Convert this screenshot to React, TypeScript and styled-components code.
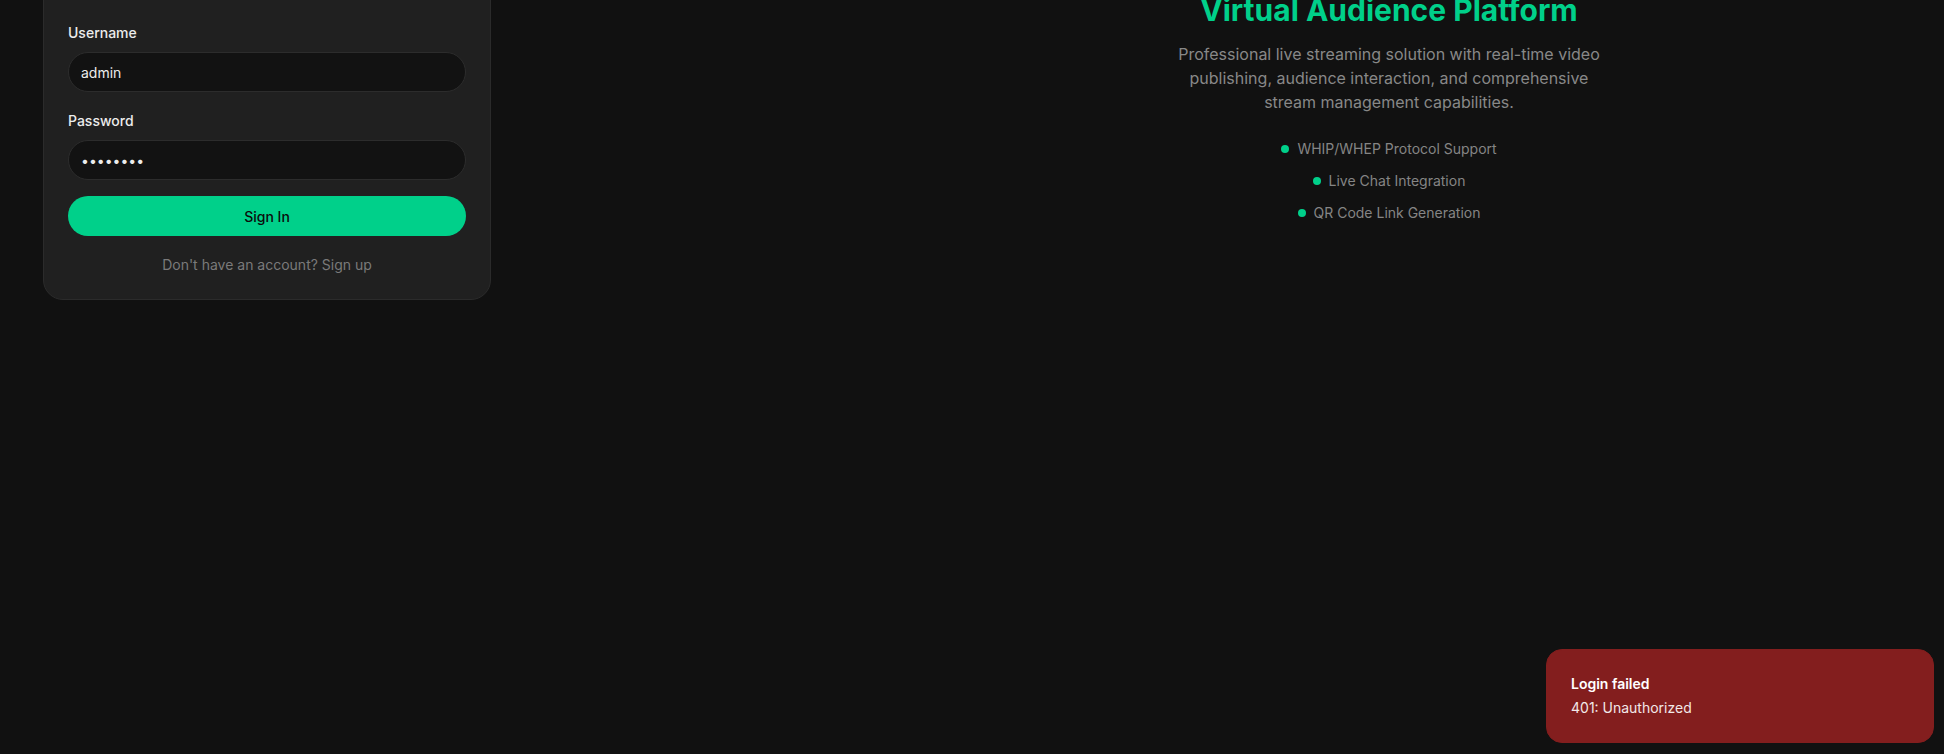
import React from "react";
import styled, { createGlobalStyle } from "styled-components";

const GlobalStyle = createGlobalStyle`
  html, body {
    margin: 0;
    padding: 0;
    background: #111111;
    font-family: Inter, "Noto Sans", Arial, sans-serif;
    overflow: hidden;
  }
  * { box-sizing: border-box; }
`;

const Page = styled.div`
  display: flow-root;
  width: 1944px;
  height: 754px;
  background: #111111;
  overflow: hidden;
`;

const Layout = styled.div`
  display: grid;
  grid-template-columns: 448px 1fr;
  column-gap: 343px;
  align-items: start;
  padding-left: 43px;
  margin-top: -40px;
`;

const Card = styled.div`
  background: #202020;
  border: 1px solid #2b2b2b;
  border-radius: 20px;
  padding: 62px 24px 24px;
  display: flex;
  flex-direction: column;
`;

const Field = styled.div<{ $gapAfter: number }>`
  display: flex;
  flex-direction: column;
  gap: 9px;
  margin-bottom: ${(p) => p.$gapAfter}px;
`;

const Label = styled.label`
  font-size: 14px;
  line-height: 20px;
  font-weight: 500;
  color: #ececec;
`;

const Input = styled.input`
  height: 40px;
  width: 100%;
  border-radius: 9999px;
  border: 1px solid #2c2c2c;
  background: #121212;
  color: #ececec;
  font-family: Inter, "Noto Sans", Arial, sans-serif;
  font-size: 14px;
  padding: 0 12px;
  outline: none;
`;

const Button = styled.button`
  height: 40px;
  width: 100%;
  border: none;
  border-radius: 9999px;
  background: #00d08a;
  color: #0b0b0b;
  font-family: Inter, "Noto Sans", Arial, sans-serif;
  font-size: 14px;
  font-weight: 500;
  cursor: pointer;
  margin-bottom: 19px;
`;

const Footnote = styled.p`
  margin: 0;
  text-align: center;
  font-size: 14px;
  line-height: 20px;
  color: #7a7a7a;
`;

const Hero = styled.div`
  display: flex;
  flex-direction: column;
  align-items: center;
  text-align: center;
  padding-top: 32px;
`;

const Title = styled.h1`
  margin: 0 0 14px;
  font-size: 30px;
  line-height: 36px;
  font-weight: 700;
  color: #00d08a;
`;

const Lead = styled.p`
  margin: 0 0 25px;
  max-width: 448px;
  font-size: 16px;
  line-height: 24px;
  color: #888888;
`;

const Features = styled.ul`
  list-style: none;
  margin: 0;
  padding: 0;
  display: flex;
  flex-direction: column;
  align-items: center;
  gap: 12px;
`;

const Feature = styled.li`
  display: flex;
  align-items: center;
  gap: 8px;
  font-size: 14px;
  line-height: 20px;
  color: #858585;
`;

const Dot = styled.span`
  width: 8px;
  height: 8px;
  border-radius: 50%;
  background: #00d08a;
  flex-shrink: 0;
`;

const Toast = styled.div`
  position: fixed;
  right: 10px;
  bottom: 11px;
  width: 388px;
  background: #831e1e;
  border: 1px solid #831e1e;
  border-radius: 16px;
  padding: 24px 32px 24px 24px;
  display: grid;
  gap: 4px;
  color: #ffffff;
`;

const ToastTitle = styled.div`
  font-size: 14px;
  line-height: 20px;
  font-weight: 600;
`;

const ToastText = styled.div`
  font-size: 14px;
  line-height: 20px;
  opacity: 0.9;
`;

const features = [
  "WHIP/WHEP Protocol Support",
  "Live Chat Integration",
  "QR Code Link Generation",
];

export default function App() {
  return (
    <>
      <GlobalStyle />
      <Page>
        <Layout>
          <Card>
            <Field $gapAfter={19}>
              <Label>Username</Label>
              <Input defaultValue="admin" />
            </Field>
            <Field $gapAfter={16}>
              <Label>Password</Label>
              <Input type="password" defaultValue="password" />
            </Field>
            <Button>Sign In</Button>
            <Footnote>Don't have an account? Sign up</Footnote>
          </Card>
          <Hero>
            <Title>Virtual Audience Platform</Title>
            <Lead>
              Professional live streaming solution with real-time video
              publishing, audience interaction, and comprehensive stream
              management capabilities.
            </Lead>
            <Features>
              {features.map((f) => (
                <Feature key={f}>
                  <Dot />
                  {f}
                </Feature>
              ))}
            </Features>
          </Hero>
        </Layout>
      </Page>
      <Toast>
        <ToastTitle>Login failed</ToastTitle>
        <ToastText>401: Unauthorized</ToastText>
      </Toast>
    </>
  );
}
